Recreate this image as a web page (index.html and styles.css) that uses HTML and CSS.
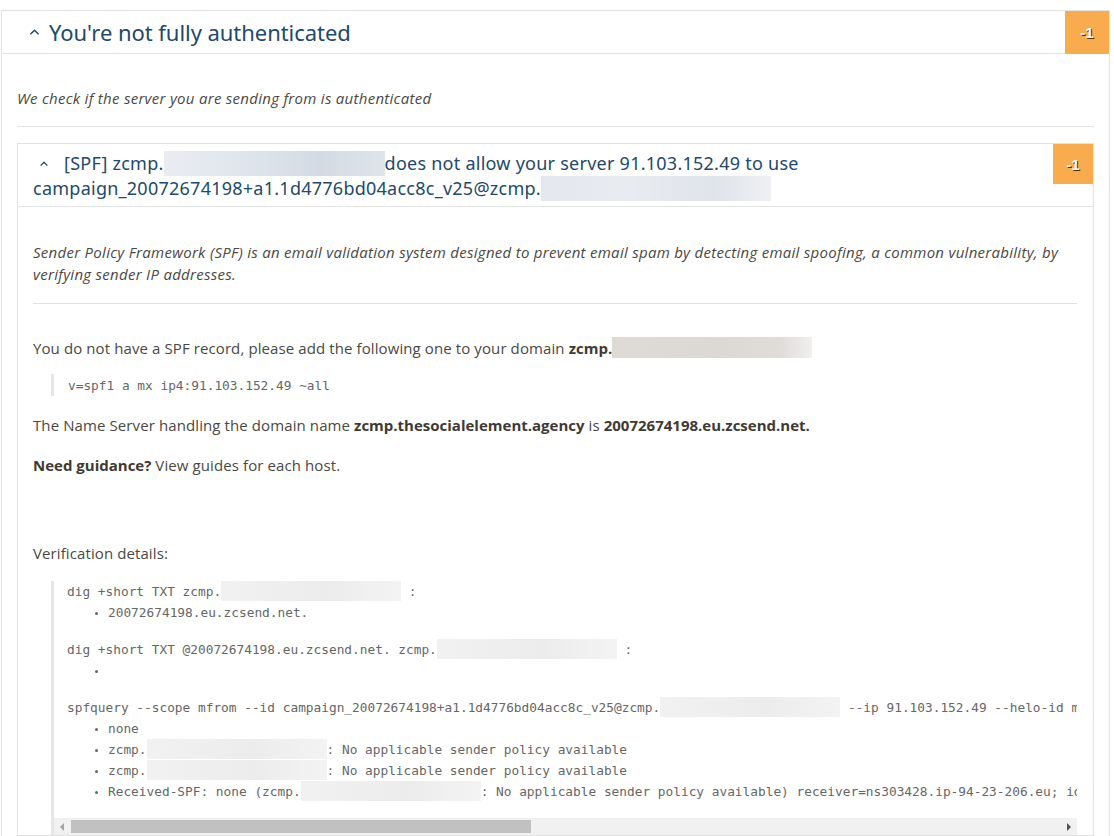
FILE: index.html
```html
<!DOCTYPE html>
<html>
<head>
<meta charset="utf-8">
<link rel="stylesheet" href="styles.css">
</head>
<body>
<div class="panel outer">
  <div class="panel-head outer-head">
    <svg class="chev chev-lg" viewBox="0 0 12 8"><polyline points="1.5,6.5 6,2 10.5,6.5" fill="none" stroke="#22496b" stroke-width="1.6"/></svg>
    <h2 class="title">You're not fully authenticated</h2>
    <span class="badge badge-lg">-1</span>
  </div>
  <div class="panel-body outer-body">
    <p class="lead">We check if the server you are sending from is authenticated</p>
    <hr class="sep sep-outer">
    <div class="panel inner">
      <div class="panel-head inner-head">
        <div class="inner-title"><svg class="chev chev-sm" viewBox="0 0 12 8"><polyline points="2,6.5 6,2.5 10,6.5" fill="none" stroke="#22496b" stroke-width="1.5"/></svg>[SPF] zcmp.<span class="redact r-h1"></span>does not allow your server 91.103.152.49 to use<br>campaign_20072674198+a1.1d4776bd04acc8c_v25@zcmp.<span class="redact r-h2"></span></div>
        <span class="badge badge-sm">-1</span>
      </div>
      <div class="panel-body inner-body">
        <p class="desc">Sender Policy Framework (SPF) is an email validation system designed to prevent email spam by detecting email spoofing, a common vulnerability, by verifying sender IP addresses.</p>
        <hr class="sep sep-inner">
        <p class="txt t1">You do not have a SPF record, please add the following one to your domain <b>zcmp.</b><span class="redact r-warm"></span></p>
        <blockquote class="quote"><code>v=spf1 a mx ip4:91.103.152.49 ~all</code></blockquote>
        <p class="txt t2">The Name Server handling the domain name <b>zcmp.thesocialelement.agency</b> is <b>20072674198.eu.zcsend.net.</b></p>
        <p class="txt t3"><b>Need guidance?</b> View guides for each host.</p>
        <p class="txt t4">Verification details:</p>
        <div class="code-box">
          <div class="code">
            <div class="cmd">dig +short TXT zcmp.<span class="redact r-code"></span> :</div>
            <ul class="res">
              <li>20072674198.eu.zcsend.net.</li>
            </ul>
            <div class="cmd">dig +short TXT @20072674198.eu.zcsend.net. zcmp.<span class="redact r-code"></span> :</div>
            <ul class="res">
              <li>&nbsp;</li>
            </ul>
            <div class="cmd">spfquery --scope mfrom --id campaign_20072674198+a1.1d4776bd04acc8c_v25@zcmp.<span class="redact r-code"></span> --ip 91.103.152.49 --helo-id mail.zcmp.thesocialelement.agency</div>
            <ul class="res last">
              <li>none</li>
              <li>zcmp.<span class="redact r-code"></span>: No applicable sender policy available</li>
              <li>zcmp.<span class="redact r-code"></span>: No applicable sender policy available</li>
              <li>Received-SPF: none (zcmp.<span class="redact r-code"></span>: No applicable sender policy available) receiver=ns303428.ip-94-23-206.eu; identity=mfrom</li>
            </ul>
          </div>
          <div class="scrollbar">
            <span class="arrow arrow-l"></span>
            <div class="track"><div class="thumb"></div></div>
            <span class="arrow arrow-r"></span>
          </div>
        </div>
      </div>
    </div>
  </div>
</div>
</body>
</html>
```
FILE: styles.css
```css
html, body {
  margin: 0;
  padding: 0;
  background: #fff;
}
body {
  padding: 10px 4px 0 1px;
  font-family: "Open Sans", "Noto Sans", sans-serif;
  color: #4a4844;
  height: 826px;
  overflow: hidden;
}
.panel {
  border: 1px solid #e2e2e2;
  background: #fff;
}
.outer {
  width: 1107px;
}
.panel-head {
  display: flex;
  align-items: flex-start;
  border-bottom: 1px solid #e2e2e2;
  position: relative;
}
.outer-head {
  height: 42px;
  align-items: center;
}
.chev {
  display: inline-block;
}
.chev-lg {
  width: 11px;
  height: 8px;
  margin: 0 9px 0 27px;
}
.chev-sm {
  width: 10px;
  height: 7px;
  margin: 0 15px 3px 6px;
  vertical-align: middle;
}
.title {
  margin: 0;
  font-family: "Noto Sans", sans-serif;
  font-weight: 400;
  font-size: 22px;
  color: #22496b;
  letter-spacing: -0.05px;
}
.badge {
  position: absolute;
  top: 0;
  right: 0;
  background: #f9ac4d;
  color: #fff;
  font-family: "Liberation Sans", Arial, sans-serif;
  font-weight: 700;
  font-size: 15px;
  text-shadow: 1px 1px 0 #5a2a10;
  display: flex;
  align-items: center;
  justify-content: center;
}
.badge-lg {
  width: 44px;
  height: 43px;
}
.badge-sm {
  width: 40px;
  height: 40px;
}
.outer-body {
  padding: 0 15px 0 15px;
}
.lead {
  margin: 33px 0 0 0;
  font-style: italic;
  font-size: 15px;
  letter-spacing: 0.28px;
  line-height: 22px;
}
.sep {
  border: 0;
  border-top: 1px solid #e2e2e2;
  margin: 0;
}
.sep-outer {
  margin-top: 17px;
}
.inner {
  margin-top: 16px;
}
.inner-head {
  padding: 7px 16px 5px 15px;
}
.inner-title {
  font-family: "Noto Sans", sans-serif;
  font-size: 18px;
  letter-spacing: 0.25px;
  line-height: 25px;
  color: #22496b;
  white-space: nowrap;
}
.redact {
  display: inline-block;
  vertical-align: top;
}
.r-h1 {
  width: 221px;
  height: 25px;
  background: linear-gradient(90deg, #e9edf2 0%, #dde3ea 45%, #d3dbe4 70%, #dfe4ea 100%);
}
.r-h2 {
  width: 230px;
  height: 25px;
  background: linear-gradient(90deg, #e4e8ee 0%, #e8ebf0 40%, #dfe4ea 75%, #eef0f3 100%);
}
.r-warm {
  width: 200px;
  height: 21px;
  background: linear-gradient(90deg, #dedbd7 0%, #dcd9d4 55%, #e0ddd9 85%, #f1f0ee 100%);
}
.r-code {
  width: 180px;
  height: 20px;
  background: linear-gradient(90deg, #f1f1f1 0%, #ececec 60%, #f3f3f3 100%);
}
.inner-body {
  padding: 0 16px 0 15px;
}
.desc {
  margin: 34px 0 0 0;
  font-style: italic;
  font-size: 15px;
  letter-spacing: 0.28px;
  line-height: 22px;
}
.sep-inner {
  margin-top: 18px;
}
.txt {
  font-size: 15px;
  letter-spacing: 0.1px;
  line-height: 22px;
  margin: 0;
}
.txt b {
  color: #3f3a33;
  letter-spacing: 0;
}
.t1 { margin-top: 33px; }
.t2 { margin-top: 18px; }
.t3 { margin-top: 18px; }
.t4 { margin-top: 66px; }
.quote {
  margin: 15px 0 0 18px;
  border-left: 3px solid #e6e6e6;
  padding: 0 0 0 14px;
  line-height: 20px;
}
code, .code {
  font-family: "DejaVu Sans Mono", monospace;
  font-size: 12.8px;
  color: #666;
}
.code-box {
  margin: 17px 0 0 18px;
  border-left: 3px solid #e6e6e6;
}
.code {
  overflow: hidden;
  white-space: nowrap;
  padding: 0 0 16px 13px;
  line-height: 21px;
}
.res {
  margin: 0 0 16px 0;
  padding-left: 41px;
  list-style: disc;
}
.res.last {
  margin-bottom: 0;
}
.res li::marker {
  font-size: 10px;
}
.scrollbar {
  display: flex;
  align-items: center;
  height: 17px;
  background: #f1f1f1;
}
.arrow {
  width: 17px;
  height: 17px;
  position: relative;
  flex: none;
}
.arrow::after {
  content: "";
  position: absolute;
  top: 5px;
  width: 0;
  height: 0;
  border-top: 4px solid transparent;
  border-bottom: 4px solid transparent;
}
.arrow-l::after {
  left: 6px;
  border-right: 4px solid #a3a3a3;
}
.arrow-r::after {
  left: 7px;
  border-left: 4px solid #505050;
}
.track {
  flex: 1;
  height: 17px;
  display: flex;
  align-items: center;
}
.thumb {
  width: 460px;
  height: 13px;
  background: #c1c1c1;
}
```
